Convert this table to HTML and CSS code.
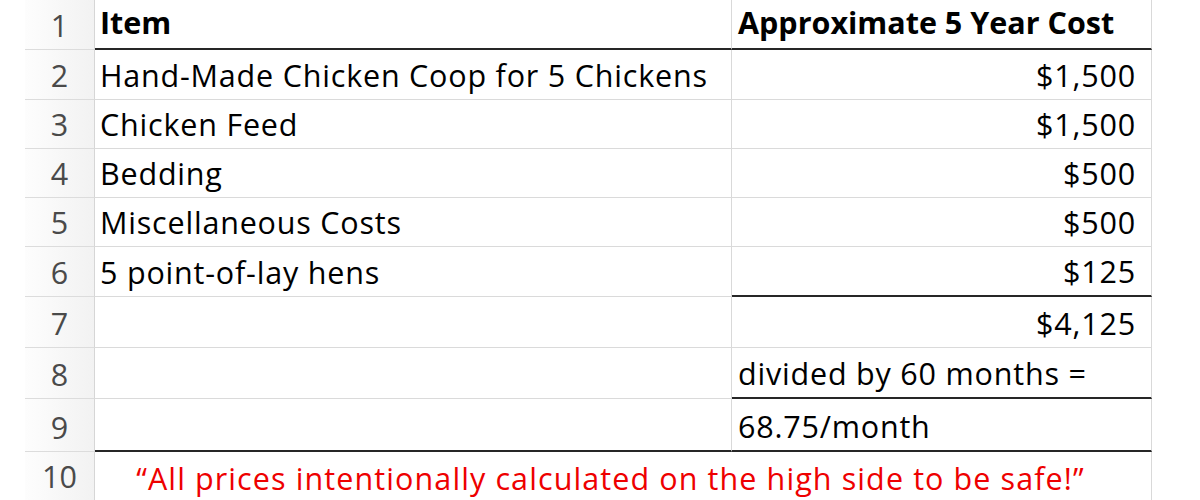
FILE: index.html
```html
<!DOCTYPE html>
<html>
<head>
<meta charset="utf-8">
<link rel="stylesheet" href="styles.css">
</head>
<body>
<div class="sheet">
  <div class="gap h1"></div><div class="rh h1">1</div><div class="c bold thick">Item</div><div class="c b bold thick">Approximate 5 Year Cost</div>
  <div class="gap h2"></div><div class="rh h2">2</div><div class="c">Hand-Made Chicken Coop for 5 Chickens</div><div class="c b r">$1,500</div>
  <div class="gap h3"></div><div class="rh h3">3</div><div class="c">Chicken Feed</div><div class="c b r">$1,500</div>
  <div class="gap h3"></div><div class="rh h3">4</div><div class="c">Bedding</div><div class="c b r">$500</div>
  <div class="gap h3"></div><div class="rh h3">5</div><div class="c">Miscellaneous Costs</div><div class="c b r">$500</div>
  <div class="gap h2"></div><div class="rh h2">6</div><div class="c">5 point-of-lay hens</div><div class="c b r thick">$125</div>
  <div class="gap h4"></div><div class="rh h4">7</div><div class="c"></div><div class="c b r">$4,125</div>
  <div class="gap h4"></div><div class="rh h4">8</div><div class="c"></div><div class="c b thick">divided by 60 months =</div>
  <div class="gap h5"></div><div class="rh h5">9</div><div class="c thick"></div><div class="c b thick">68.75/month</div>
  <div class="gap h6"></div><div class="rh h6 last">10</div><div class="c note last">“All prices intentionally calculated on the high side to be safe!”</div>
</div>
</body>
</html>
```

FILE: styles.css
```css
html, body {
  margin: 0;
  padding: 0;
  background: #ffffff;
}

.sheet {
  display: grid;
  grid-template-columns: 25px 70px 637px 420px;
  font-family: "Open Sans", "Liberation Sans", sans-serif;
  font-size: 30.5px;
  line-height: 1;
  color: #000;
}

.gap {
  background: #ffffff;
}

.h1 { height: 50px; }
.h2 { height: 50px; }
.h3 { height: 49px; }
.h4 { height: 51px; }
.h5 { height: 53px; }
.h6 { height: 48px; }

.rh {
  box-sizing: border-box;
  display: flex;
  align-items: flex-end;
  justify-content: center;
  padding-bottom: 9px;
  background: linear-gradient(90deg, #fdfdfd 0%, #f2f2f2 100%);
  border-right: 1px solid #d6d6d6;
  border-bottom: 1px solid #dcdcdc;
  color: #4a4a4a;
}

.c {
  box-sizing: border-box;
  display: flex;
  align-items: flex-end;
  padding: 0 6px 9px 5px;
  border-right: 1px solid #d9d9d9;
  border-bottom: 1px solid #dadada;
  white-space: nowrap;
  letter-spacing: 0.8px;
}

.b {
  padding-left: 6px;
  padding-right: 15px;
}

.r {
  justify-content: flex-end;
}

.bold {
  font-weight: 700;
  padding-bottom: 11px;
  letter-spacing: 0;
}

.thick {
  border-bottom: 2px solid #262626;
}

.note {
  grid-column: span 2;
  justify-content: center;
  color: #ee0000;
  padding-bottom: 7px;
  padding-right: 30px;
  letter-spacing: 1.1px;
}

.last {
  border-bottom: none;
}
```
